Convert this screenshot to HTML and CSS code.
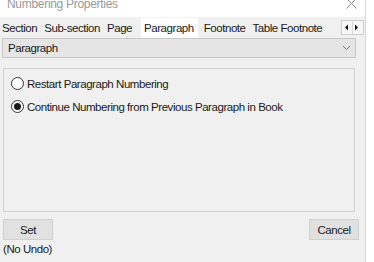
FILE: index.html
```html
<!DOCTYPE html>
<html lang="en">
<head>
    <meta charset="UTF-8">
    <title>Numbering Properties</title>
    <link rel="stylesheet" href="styles.css">
</head>
<body>

    <div class="window">
        <div class="titlebar">
            <span class="title">Numbering Properties</span>
            <svg class="close" width="11" height="11" viewBox="0 0 11 11">
                <path d="M0.5 0.5 L10.5 10.5 M10.5 0.5 L0.5 10.5" stroke="#8a8a8a" stroke-width="1" fill="none"/>
            </svg>
        </div>

        <div class="tabbar">
            <span class="tab first">Section</span>
            <span class="tab">Sub-section</span>
            <span class="tab">Page</span>
            <span class="tab active">Paragraph</span>
            <span class="tab">Footnote</span>
            <span class="tab">Table Footnote</span>
            <svg class="scroller" width="23" height="15" viewBox="0 0 23 15">
                <rect x="0.5" y="0.5" width="22" height="14" fill="#f7f7f7" stroke="#cfcfcf"/>
                <line x1="11.5" y1="1" x2="11.5" y2="14" stroke="#d8d8d8"/>
                <path d="M4 7.5 L7 4.5 L7 10.5 Z" fill="#111"/>
                <path d="M17 7.5 L14 4.5 L14 10.5 Z" fill="#111"/>
            </svg>
        </div>

        <div class="combo">
            <span>Paragraph</span>
            <svg width="9" height="6" viewBox="0 0 9 6">
                <path d="M1 1 L4.5 4.5 L8 1" stroke="#777" stroke-width="1" fill="none"/>
            </svg>
        </div>

        <div class="group">
            <label class="radio-row">
                <span class="radio"></span>
                <span>Restart Paragraph Numbering</span>
            </label>
            <label class="radio-row">
                <span class="radio checked"></span>
                <span>Continue Numbering from Previous Paragraph in Book</span>
            </label>
        </div>

        <div class="buttons">
            <button>Set</button>
            <button>Cancel</button>
        </div>
        <div class="note">(No Undo)</div>
    </div>

</body>
</html>
```

FILE: styles.css
```css
body {
    margin: 0;
    background-color: #fff;
    font-family: 'Liberation Sans', Arial, sans-serif;
    font-size: 11.5px;
    letter-spacing: -0.45px;
    color: #1a1a1a;
}

.window {
    width: 365px;
    height: 262px;
    background-color: #f0f0f0;
    border-right: 1px solid #d8d8d8;
    overflow: hidden;
}

.titlebar {
    display: flex;
    justify-content: space-between;
    height: 17px;
    background-color: #fff;
    overflow: hidden;
}

.title {
    margin-top: -3px;
    padding-left: 7px;
    font-size: 12px;
    line-height: 14px;
    letter-spacing: -0.3px;
    color: #999;
}

.close {
    margin: -2px 8px 0 0;
}

.tabbar {
    display: flex;
    height: 21px;
    padding-top: 1px;
    box-sizing: border-box;
}

.tab {
    padding: 1px 4px 0 3px;
    line-height: 19px;
    white-space: nowrap;
}

.tab.first {
    padding-left: 2px;
}

.tab.active {
    background-color: #fff;
    padding: 1px 4px 0 3px;
    margin: 0 3px 0 5px;
}

.scroller {
    flex-shrink: 0;
    margin: 2px 1px 0 auto;
}

.combo {
    display: flex;
    align-items: center;
    justify-content: space-between;
    height: 20px;
    margin: 0 9px 0 2px;
    padding: 0 4px 0 5px;
    box-sizing: border-box;
    background-color: #e5e5e5;
    border: 1px solid #c8c8c8;
}

.group {
    height: 144px;
    margin: 10px 10px 0 3px;
    padding: 8px 0 0 7px;
    box-sizing: border-box;
    border: 1px solid #d2d2d2;
    display: flex;
    flex-direction: column;
    gap: 10px;
}

.radio-row {
    display: flex;
    align-items: center;
    gap: 3px;
    height: 13px;
}

.radio {
    width: 13px;
    height: 13px;
    flex-shrink: 0;
    box-sizing: border-box;
    border: 1px solid #333;
    border-radius: 50%;
    background-color: #fff;
    display: flex;
    align-items: center;
    justify-content: center;
}

.radio.checked::after {
    content: '';
    width: 7px;
    height: 7px;
    border-radius: 50%;
    background-color: #1a1a1a;
}

.buttons {
    display: flex;
    justify-content: space-between;
    margin-top: 7px;
    padding: 0 6px 0 3px;
}

button {
    width: 50px;
    height: 21px;
    padding: 0;
    font-family: inherit;
    font-size: 11.5px;
    letter-spacing: -0.45px;
    color: #1a1a1a;
    background-color: #e1e1e1;
    border: 1px solid #d0d0d0;
}

.note {
    padding-left: 3px;
    margin-top: 2px;
    line-height: 14px;
}
```
